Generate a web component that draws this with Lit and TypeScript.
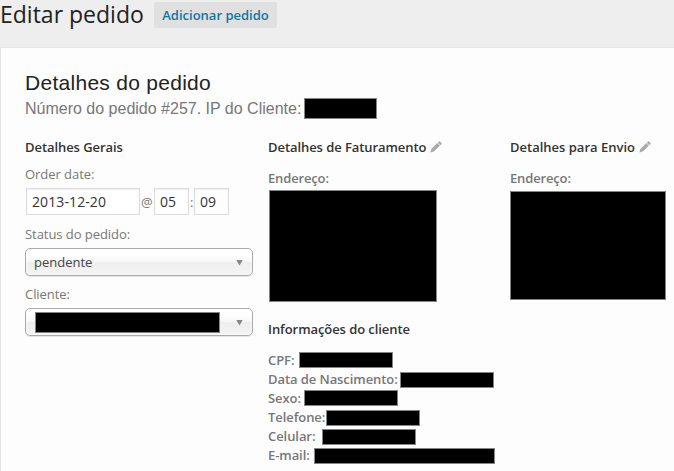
import { LitElement, html, css, svg } from "lit";
import { customElement } from "lit/decorators.js";
import { styleMap } from "lit/directives/style-map.js";

interface Field { label: string; indent: number; top: number; width: number; }

const customerFields: Field[] = [
  { label: "CPF:", indent: 31, top: 1, width: 94 },
  { label: "Data de Nascimento:", indent: 132, top: 2, width: 94 },
  { label: "Sexo:", indent: 36, top: 1, width: 94 },
  { label: "Telefone:", indent: 58, top: 2, width: 94 },
  { label: "Celular:", indent: 54, top: 2, width: 94 },
  { label: "E-mail:", indent: 46, top: 2, width: 181 },
];

const pencil = html`<svg class="pencil" viewBox="0 0 12 12">${svg`
  <path d="M9 0.5 Q9.5 0.1 10 0.5 L11.5 2 Q11.9 2.5 11.5 3 L10.3 4.2 L7.8 1.7Z M7.3 2.1 L9.9 4.7 L3.8 10.5 L0.3 11.6 L1.3 8Z"/>`}</svg>`;

@customElement("app-root")
export class AppRoot extends LitElement {
  static styles = css`
    :host {
      display: flex; flex-direction: column; box-sizing: border-box;
      width: 674px; height: 471px; overflow: hidden;
      background: #eee; color: #777;
      font: 13px/19px "Open Sans", sans-serif;
    }
    * { box-sizing: border-box; }
    h1, h2, h3, p { margin: 0; font-weight: 400; }
    .top { display: flex; height: 47px; flex: none; align-items: flex-start; }
    h1 { width: 154px; font-size: 23px; line-height: 29px; color: #222; white-space: nowrap; }
    .add {
      width: 123px; height: 26px; margin-top: 2px; border-radius: 2px; background: #e0e0e0;
      color: #0f76a0; font-weight: 600; line-height: 27px; text-align: center; white-space: nowrap;
    }
    .panel {
      flex: 1; border: solid #e5e5e5; border-width: 1px 0 0 1px; background: #fdfdfd;
      padding: 22px 0 0 24px;
    }
    h2 { font: 21px/26px "Liberation Sans", Arial, sans-serif; letter-spacing: .28px; color: #222; white-space: nowrap; }
    .number { display: flex; height: 25px; font: 16px/25px "Liberation Sans", Arial, sans-serif; white-space: nowrap; }
    .number span { width: 279px; }
    .bar { flex: none; display: block; background: #000; border: 1px solid #858585; }
    .ip { width: 73px; height: 21px; margin-top: 2px; }
    .columns { display: grid; grid-template-columns: 243px 242px 1fr; margin-top: 16px; }
    h3 { display: flex; font-size: 13px; font-weight: 600; line-height: 20px; height: 20px; color: #333; letter-spacing: -.07px; white-space: nowrap; }
    .ship { letter-spacing: 0; }
    .pencil { width: 12px; height: 12px; margin: 4px 0 0 4px; fill: #aaa; }
    .label { height: 20px; line-height: 20px; letter-spacing: -.05px; white-space: nowrap; }
    .first { margin-top: 7px; }
    .when { display: flex; height: 27px; margin: 4px 0 0 1px; line-height: 28px; }
    .input {
      width: 35px; height: 27px; border: 1px solid #ddd; background: #fff; padding-left: 5px;
      box-shadow: inset 0 1px 2px rgba(0,0,0,.07); color: #333; font-size: 14px; line-height: 26px; white-space: nowrap;
    }
    .date { width: 114px; letter-spacing: .1px; }
    .at { width: 14px; padding-left: 1px; }
    .colon { width: 5px; padding-left: 1px; }
    .status { margin-top: 9px; }
    .client { margin-top: 8px; }
    .select {
      display: flex; align-items: center; justify-content: space-between;
      width: 228px; height: 28px; margin-top: 4px; padding: 0 9px 0 8px;
      border: 1px solid #aaa; border-radius: 5px; color: #444;
      background: linear-gradient(#fff 20%, #f6f6f6 50%, #eee 52%, #f4f4f4 100%);
      box-shadow: inset 0 0 3px #fff, 0 1px 1px rgba(0,0,0,.1);
    }
    .arrow { width: 7px; height: 6px; margin-top: 1px; background: #888; clip-path: polygon(0 0, 100% 0, 50% 100%); }
    .name { width: 185px; height: 21px; margin-left: 1px; }
    .strong { font-weight: 600; letter-spacing: -.15px; }
    .address { margin-top: 11px; }
    .billing { width: 168px; height: 112px; margin: 2px 0 0 1px; }
    .shipping { width: 156px; height: 109px; margin-top: 3px; }
    .info { margin-top: 17px; margin-bottom: 12px; }
    .field { display: flex; height: 19px; align-items: flex-start; font-weight: 600; letter-spacing: -.07px; white-space: nowrap; }
    .field .bar { height: 16px; }
  `;

  render() {
    return html`
      <header class="top"><h1>Editar pedido</h1><a class="add">Adicionar pedido</a></header>
      <main class="panel">
        <h2>Detalhes do pedido</h2>
        <p class="number"><span>Número do pedido #257. IP do Cliente:</span><i class="bar ip"></i></p>
        <div class="columns">
          <section>
            <h3>Detalhes Gerais</h3>
            <p class="label first">Order date:</p>
            <div class="when">
              <div class="input date">2013-12-20</div><span class="at">@</span>
              <div class="input">05</div><span class="colon">:</span>
              <div class="input">09</div>
            </div>
            <p class="label status">Status do pedido:</p>
            <div class="select"><span>pendente</span><i class="arrow"></i></div>
            <p class="label client">Cliente:</p>
            <div class="select"><i class="bar name"></i><i class="arrow"></i></div>
          </section>
          <section>
            <h3>Detalhes de Faturamento${pencil}</h3>
            <p class="label strong address">Endereço:</p>
            <i class="bar billing"></i>
            <h3 class="info">Informações do cliente</h3>
            ${customerFields.map((f) => html`
              <div class="field">
                <span style=${styleMap({ width: `${f.indent}px` })}>${f.label}</span>
                <i class="bar" style=${styleMap({ width: `${f.width}px`, marginTop: `${f.top}px` })}></i>
              </div>`)}
          </section>
          <section>
            <h3 class="ship">Detalhes para Envio${pencil}</h3>
            <p class="label strong address">Endereço:</p>
            <i class="bar shipping"></i>
          </section>
        </div>
      </main>`;
  }
}
